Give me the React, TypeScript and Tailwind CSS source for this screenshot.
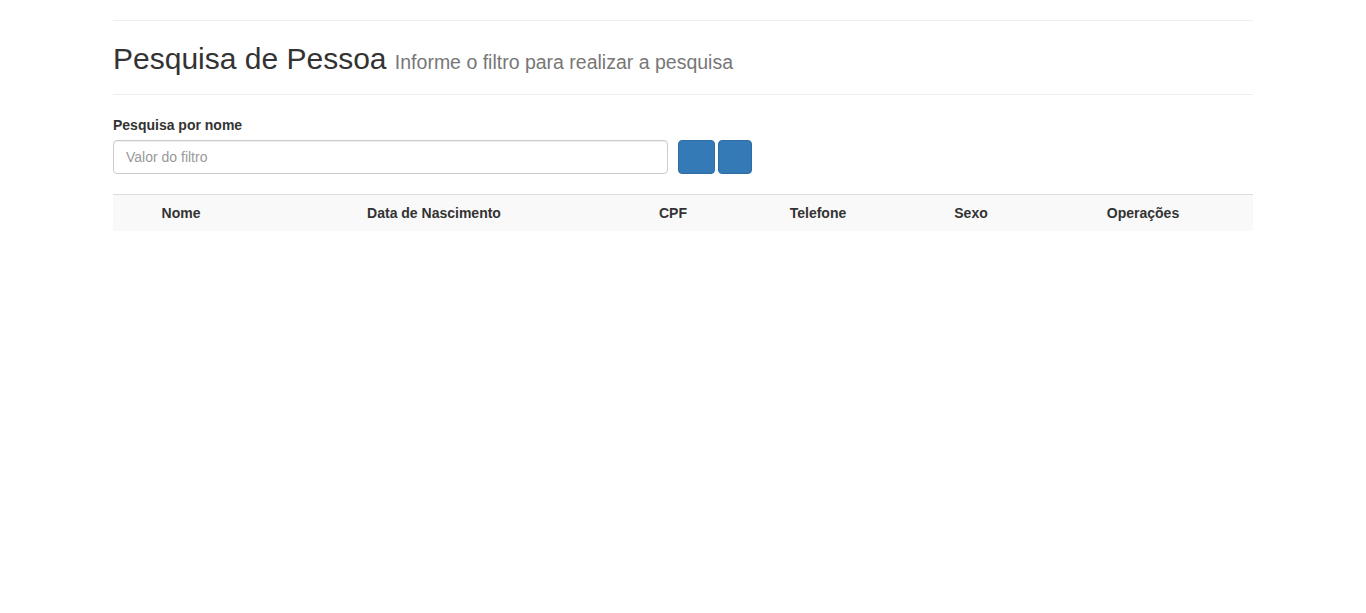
const colunas = [
  { titulo: "Nome", largura: "w-[136px]" },
  { titulo: "Data de Nascimento", largura: "w-[370px]" },
  { titulo: "CPF", largura: "w-[108px]" },
  { titulo: "Telefone", largura: "w-[182px]" },
  { titulo: "Sexo", largura: "w-[124px]" },
  { titulo: "Operações", largura: "w-[220px]" },
];

const App = () => {
  return (
    <div className="min-h-screen bg-white font-['Liberation_Sans',Arial,sans-serif] text-[#333]">
      <div className="mx-auto w-[1140px] pt-5">
        <div className="border-t border-[#eee]"></div>
        <div className="border-b border-[#eee] pt-[18px] pb-[12px]">
          <h1 className="text-[30px] leading-[40px] text-[#333]">
            Pesquisa de Pessoa{" "}
            <small className="text-[19.5px] text-[#777]">Informe o filtro para realizar a pesquisa</small>
          </h1>
        </div>

        <div className="mt-5">
          <label className="block text-sm font-bold leading-5 mb-[5px]">Pesquisa por nome</label>
          <div className="flex items-center">
            <input
              type="text"
              placeholder="Valor do filtro"
              className="w-[555px] h-[34px] px-3 text-sm text-[#555] placeholder:text-[#999] border border-[#ccc] rounded-[4px] shadow-[inset_0_1px_1px_rgba(0,0,0,0.075)] outline-none"
            />
            <div className="flex gap-[3px] ml-[10px]">
              <button className="w-[37px] h-[34px] bg-[#337ab7] border border-[#2e6da4] rounded-[4px]"></button>
              <button className="w-[34px] h-[34px] bg-[#337ab7] border border-[#2e6da4] rounded-[4px]"></button>
            </div>
          </div>
        </div>

        <div className="mt-5 border-t border-[#ddd] bg-[#f9f9f9] flex">
          {colunas.map((c) => (
            <div key={c.titulo} className={`${c.largura} py-2 text-center text-sm font-bold leading-5 text-[#333]`}>
              {c.titulo}
            </div>
          ))}
        </div>
      </div>
    </div>
  );
};

export default App;
